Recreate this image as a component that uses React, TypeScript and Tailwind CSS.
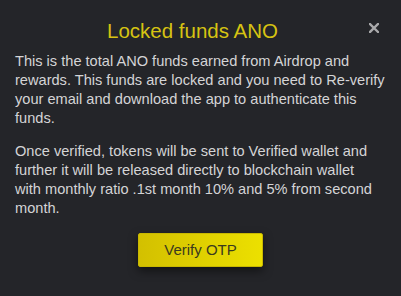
export default function App() {
  return (
    <div className="w-[401px] h-[296px] bg-[#242529] relative overflow-hidden" style={{ fontFamily: '"Liberation Sans", Arial, sans-serif' }}>
      <div className="pt-[18px] pr-[16px] text-center text-[20.5px] leading-[26px] text-[#d6c312]">Locked funds ANO</div>
      <button className="absolute right-[22px] top-[23px] text-[#a9a9ab]">
        <svg width="10" height="10" viewBox="0 0 10 10">
          <path d="M1 1 L9 9 M9 1 L1 9" stroke="currentColor" strokeWidth="2.4" strokeLinecap="square" />
        </svg>
      </button>
      <div className="px-[15px] pt-[8px] text-[14.6px] leading-[19px] text-[#d4d4d6] whitespace-nowrap">
        <p>This is the total ANO funds earned from Airdrop and<br />rewards. This funds are locked and you need to Re-verify<br />your email and download the app to authenticate this<br />funds.</p>
        <p className="mt-[14px]">Once verified, tokens will be sent to Verified wallet and<br />further it will be released directly to blockchain wallet<br />with monthly ratio .1st month 10% and 5% from second<br />month.</p>
      </div>
      <div className="flex justify-center mt-[15px]">
        <button className="w-[125px] h-[34px] rounded-[2px] bg-gradient-to-r from-[#d3c000] to-[#ece000] text-[#3b3a1e] text-[15px] shadow-[0_4px_10px_rgba(0,0,0,0.5)] border border-[#c8b800]">Verify OTP</button>
      </div>
    </div>
  );
}
